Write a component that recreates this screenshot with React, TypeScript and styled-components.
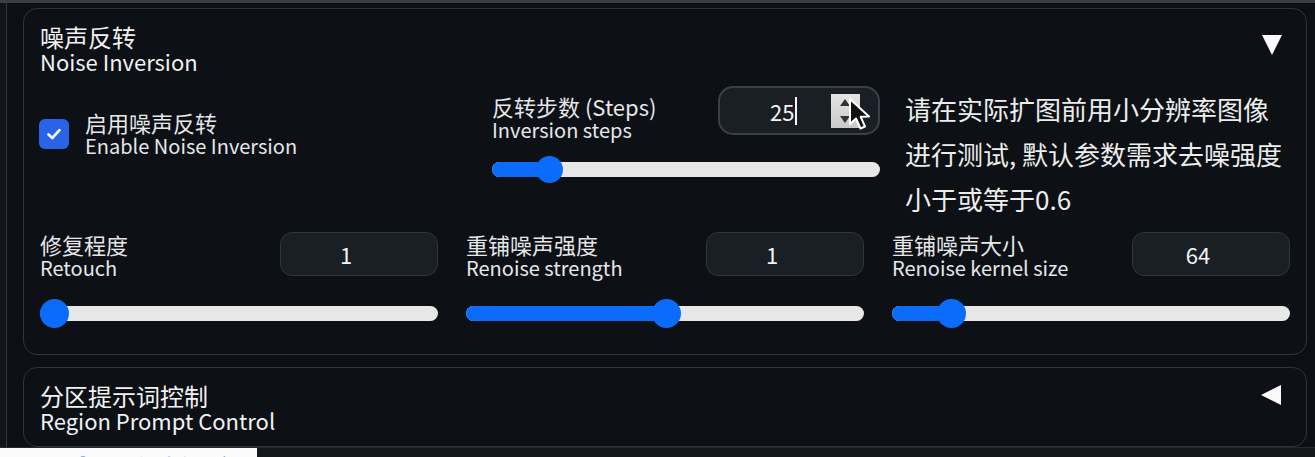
import styled, { createGlobalStyle } from "styled-components"

const GlobalStyle = createGlobalStyle`
  html, body {
    margin: 0;
    padding: 0;
    background: #0c0f14;
  }
  body {
    font-family: "Noto Sans CJK SC", "Noto Sans", sans-serif;
    color: #e9eaec;
  }
`

type Field = { zh: string; en: string; value: string; pct: number }

const fields: Field[] = [
  { zh: "修复程度", en: "Retouch", value: "1", pct: 0 },
  { zh: "重铺噪声强度", en: "Renoise strength", value: "1", pct: 0.503 },
  { zh: "重铺噪声大小", en: "Renoise kernel size", value: "64", pct: 0.122 },
]

const Slider = ({ pct, thumb = 29 }: { pct: number; thumb?: number }) => (
  <SliderWrap $thumb={thumb}>
    <Track>
      <Fill style={{ width: `calc((100% - ${thumb}px) * ${pct} + ${thumb / 2}px)` }} />
      <Thumb $size={thumb} style={{ left: `calc((100% - ${thumb}px) * ${pct})` }} />
    </Track>
  </SliderWrap>
)

const App = () => {
  return (
    <>
      <GlobalStyle />
      <Screen>
        <Body>
          <Gutter />
          <Main>
            <Panel>
              <PanelHeader>
                <Title>
                  <span>噪声反转</span>
                  <span>Noise Inversion</span>
                </Title>
                <Caret $dir="down" $top={11} />
              </PanelHeader>

              <TopRow>
                <CheckCol>
                  <CheckBox>
                    <svg width="18" height="18" viewBox="0 0 18 18">
                      <path d="M3.5 9.5 L7.3 13 L14.5 5.2" fill="none" stroke="#fff" strokeWidth="2.6" strokeLinecap="round" strokeLinejoin="round" />
                    </svg>
                  </CheckBox>
                  <Label>
                    <span>启用噪声反转</span>
                    <span>Enable Noise Inversion</span>
                  </Label>
                </CheckCol>

                <StepsCol>
                  <FieldHead>
                    <Label $offset={8}>
                      <span>反转步数 (Steps)</span>
                      <span>Inversion steps</span>
                    </Label>
                    <NumberBox $focused>
                      <Value>25</Value>
                      <TextCaret />
                      <Spinner>
                        <SpinArrow $up />
                        <SpinArrow />
                      </Spinner>
                      <Pointer width="26" height="36" viewBox="0 0 26 36">
                        <path d="M2 2 L2 27 L8 21.5 L12.5 31.5 L17 29.5 L12.7 19.8 L21 19.5 Z" fill="#111" stroke="#fff" strokeWidth="2" strokeLinejoin="round" />
                      </Pointer>
                    </NumberBox>
                  </FieldHead>
                  <Slider pct={0.123} thumb={27} />
                </StepsCol>

                <Hint>
                  <span>请在实际扩图前用小分辨率图像</span>
                  <span>进行测试, 默认参数需求去噪强度</span>
                  <span>小于或等于0.6</span>
                </Hint>
              </TopRow>

              <BottomRow>
                {fields.map((f) => (
                  <FieldCol key={f.en}>
                    <FieldHead>
                      <Label>
                        <span>{f.zh}</span>
                        <span>{f.en}</span>
                      </Label>
                      <NumberBox>
                        <Value $center>{f.value}</Value>
                      </NumberBox>
                    </FieldHead>
                    <Slider pct={f.pct} />
                  </FieldCol>
                ))}
              </BottomRow>
            </Panel>

            <Panel $closed>
              <PanelHeader>
                <Title>
                  <span>分区提示词控制</span>
                  <span>Region Prompt Control</span>
                </Title>
                <Caret $dir="left" $top={2} />
              </PanelHeader>
            </Panel>
          </Main>
        </Body>
        <Footer>
          <Caption>
            <span>噪声反转参数说明</span>
          </Caption>
        </Footer>
      </Screen>
    </>
  )
}

export default App

const Screen = styled.div`
  width: 1315px;
  height: 457px;
  overflow: hidden;
  display: flex;
  flex-direction: column;
  border-top: 3px solid #3c3e42;
  box-sizing: border-box;
  background: #0c0f14;
`

const Body = styled.div`
  flex: 1;
  display: flex;
  min-height: 0;
`

const Gutter = styled.div`
  flex: 0 0 6px;
  background: #121418;
  border-right: 1px solid #34373c;
`

const Main = styled.div`
  flex: 1;
  min-width: 0;
  display: flex;
  flex-direction: column;
  gap: 12px;
  padding: 5px 8px 0 16px;
`

const Panel = styled.div<{ $closed?: boolean }>`
  border: 1px solid #30343a;
  border-radius: 14px;
  padding: ${(p) => (p.$closed ? "15px 16px 13px" : "15px 16px 24px")};
  background: #0d1015;
  box-sizing: border-box;
  height: ${(p) => (p.$closed ? "80px" : "347px")};
`

const PanelHeader = styled.div`
  display: flex;
  justify-content: space-between;
  align-items: flex-start;
`

const Title = styled.div`
  display: flex;
  flex-direction: column;
  font-size: 24px;
  line-height: 25px;
  color: #f1f2f3;
  & > span:last-child {
    font-size: 22px;
  }
`

const Caret = styled.div<{ $dir: "down" | "left"; $top: number }>`
  width: 0;
  height: 0;
  margin: ${(p) => p.$top}px ${(p) => (p.$dir === "down" ? 8 : 9)}px 0 0;
  ${(p) =>
    p.$dir === "down"
      ? `border-left: 10px solid transparent;
         border-right: 10px solid transparent;
         border-top: 20px solid #fafafa;`
      : `border-top: 10px solid transparent;
         border-bottom: 10px solid transparent;
         border-right: 20px solid #fafafa;`}
`

const TopRow = styled.div`
  display: grid;
  grid-template-columns: 424px 388px 1fr;
  column-gap: 28px;
  margin-top: 12px;
  height: 135px;
  & > :nth-child(3) {
    margin-left: -3px;
  }
`

const CheckCol = styled.div`
  display: flex;
  align-items: center;
  gap: 16px;
  padding-top: 24px;
  align-self: start;
`

const CheckBox = styled.div`
  width: 30px;
  height: 30px;
  margin-left: -1px;
  border-radius: 6px;
  background: #2b63e6;
  display: flex;
  align-items: center;
  justify-content: center;
  flex-shrink: 0;
`

const Label = styled.div<{ $offset?: number }>`
  display: flex;
  flex-direction: column;
  font-size: 22px;
  line-height: 24px;
  color: #e6e7e9;
  white-space: nowrap;
  padding-top: ${(p) => p.$offset ?? 0}px;
  & > span:last-child {
    font-size: 20px;
  }
`

const StepsCol = styled.div`
  display: flex;
  flex-direction: column;
  gap: 14px;
`

const FieldHead = styled.div`
  display: flex;
  justify-content: space-between;
  align-items: flex-start;
`

const NumberBox = styled.div<{ $focused?: boolean }>`
  position: relative;
  box-sizing: border-box;
  flex-shrink: 0;
  width: ${(p) => (p.$focused ? 162 : 158)}px;
  height: ${(p) => (p.$focused ? 49 : 44)}px;
  border-radius: ${(p) => (p.$focused ? 15 : 12)}px;
  background: #1a1e25;
  border: ${(p) => (p.$focused ? "2px solid #3b4048" : "1px solid #30353c")};
  display: flex;
  align-items: center;
  padding: ${(p) => (p.$focused ? "0 0 0 50px" : "0 26px 0 0")};
  font-size: 22px;
  color: #f2f3f4;
`

const Value = styled.span<{ $center?: boolean }>`
  flex: ${(p) => (p.$center ? 1 : "none")};
  text-align: center;
  line-height: 1;
`

const TextCaret = styled.span`
  width: 1.5px;
  height: 28px;
  background: #f5f5f5;
  margin-left: 1px;
`

const Spinner = styled.div`
  margin-left: 34px;
  width: 29px;
  height: 34px;
  background: linear-gradient(#e4e4e4, #c9c9c9);
  display: flex;
  flex-direction: column;
  align-items: center;
  justify-content: space-between;
  padding: 5px 0;
  box-sizing: border-box;
`

const SpinArrow = styled.span<{ $up?: boolean }>`
  width: 0;
  height: 0;
  border-left: 5px solid transparent;
  border-right: 5px solid transparent;
  ${(p) => (p.$up ? "border-bottom: 7px solid #333;" : "border-top: 7px solid #333;")}
`

const Pointer = styled.svg`
  position: absolute;
  left: 128px;
  top: 9px;
`

const SliderWrap = styled.div<{ $thumb: number }>`
  height: ${(p) => p.$thumb}px;
  display: flex;
  align-items: center;
`

const Track = styled.div`
  position: relative;
  width: 100%;
  height: 15px;
  border-radius: 8px;
  background: #e7e7e7;
`

const Fill = styled.div`
  position: absolute;
  left: 0;
  top: 0;
  bottom: 0;
  border-radius: 8px;
  background: #0b6cfb;
`

const Thumb = styled.div<{ $size: number }>`
  position: absolute;
  top: 50%;
  width: ${(p) => p.$size}px;
  height: ${(p) => p.$size}px;
  margin-top: ${(p) => -p.$size / 2}px;
  border-radius: 50%;
  background: #0b6cfb;
`

const Hint = styled.div`
  display: flex;
  flex-direction: column;
  font-size: 26px;
  line-height: 45px;
  white-space: nowrap;
  color: #eceded;
`

const BottomRow = styled.div`
  display: grid;
  grid-template-columns: repeat(3, 1fr);
  column-gap: 28px;
  margin-top: 11px;
`

const FieldCol = styled.div`
  display: flex;
  flex-direction: column;
  gap: 19px;
`

const Footer = styled.div`
  height: 10px;
  display: flex;
  background: #15171b;
  border-top: 1px solid #26292e;
  box-sizing: border-box;
`

const Caption = styled.div`
  width: 257px;
  box-sizing: border-box;
  background: #fbfbfb;
  overflow: hidden;
  padding-left: 18px;
  font-size: 34px;
  line-height: 1;
  color: #2f7de0;
  font-weight: 700;
  letter-spacing: 14px;
  white-space: nowrap;
  & > span {
    display: block;
    margin-top: 7px;
  }
`
